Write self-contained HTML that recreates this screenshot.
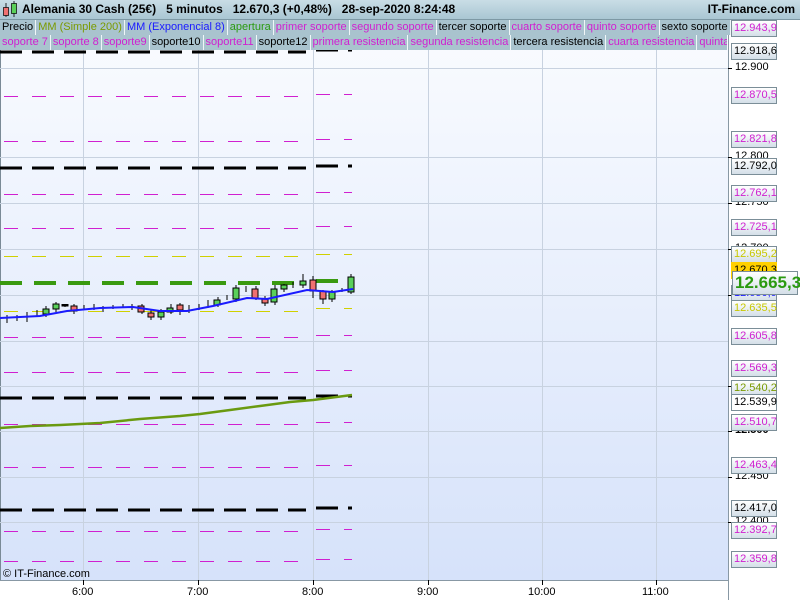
<!DOCTYPE html>
<html><head><meta charset="utf-8"><style>
body{margin:0;width:800px;height:600px;overflow:hidden;font-family:"Liberation Sans",sans-serif;background:#fff;position:relative}
.top{position:absolute;left:0;top:0;width:800px;height:19px;background:linear-gradient(#c9dde6,#a9c6d3);border-bottom:1px solid #7d98a4;font-size:12px;font-weight:bold;line-height:19px}
.leg{position:absolute;left:0;height:15px;font-size:11px;line-height:15px;white-space:nowrap;display:flex}
.leg span{background:#a9c3ce;border-right:1px solid #f0f6f8;padding:0 2px}
.lbl{position:absolute;left:731px;font-size:11px;line-height:15px;padding-left:2px;box-sizing:border-box;width:46px;height:17px;border:1px solid #7b8e98;background:linear-gradient(#fff,#d4dfe8)}
.ax{position:absolute;font-size:11px;color:#000}
</style></head><body>
<svg width="800" height="600" style="position:absolute;left:0;top:0">
<defs><linearGradient id="bg" x1="0" y1="0" x2="0" y2="1"><stop offset="0" stop-color="#fafcff"/><stop offset="1" stop-color="#d6e2fa"/></linearGradient></defs>
<rect x="0" y="19" width="728" height="561" fill="url(#bg)"/>
<rect x="0" y="19" width="1" height="580" fill="#7a8a96"/>
<g stroke="#c8d2e0" stroke-width="1">
<line x1="83.5" y1="49" x2="83.5" y2="586"/><line x1="198.5" y1="49" x2="198.5" y2="586"/><line x1="313.5" y1="49" x2="313.5" y2="586"/><line x1="428.5" y1="49" x2="428.5" y2="586"/><line x1="542.5" y1="49" x2="542.5" y2="586"/><line x1="656.5" y1="49" x2="656.5" y2="586"/>
<line x1="0" y1="68.5" x2="728" y2="68.5"/><line x1="0" y1="157.5" x2="728" y2="157.5"/><line x1="0" y1="203.5" x2="728" y2="203.5"/><line x1="0" y1="249.5" x2="728" y2="249.5"/><line x1="0" y1="295.5" x2="728" y2="295.5"/><line x1="0" y1="341.5" x2="728" y2="341.5"/><line x1="0" y1="386.5" x2="728" y2="386.5"/><line x1="0" y1="431.5" x2="728" y2="431.5"/><line x1="0" y1="477.5" x2="728" y2="477.5"/><line x1="0" y1="522.5" x2="728" y2="522.5"/>
</g>
<rect x="0" y="580" width="728" height="20" fill="#fff"/>
<line x1="0" y1="580.5" x2="728" y2="580.5" stroke="#8898a4"/>
<line x1="728.5" y1="19" x2="728.5" y2="600" stroke="#8898a4"/>
<g stroke="#000" stroke-width="3" stroke-dasharray="22,10">
<path d="M0 52H306M316 50H352"/><path d="M0 168H306M316 166H352"/><path d="M0 398H306M316 396H352"/><path d="M0 510H306M316 508H352"/>
</g>
<g stroke="#d020d0" stroke-width="1" stroke-dasharray="14,14">
<path d="M4 96.5H306M316 94.5H352"/><path d="M4 141.5H306M316 139.5H352"/><path d="M4 194.5H306M316 192.5H352"/><path d="M4 228.5H306M316 226.5H352"/><path d="M4 337.5H306M316 335.5H352"/><path d="M4 372.5H306M316 370.5H352"/><path d="M4 424.5H306M316 422.5H352"/><path d="M4 467.5H306M316 465.5H352"/><path d="M4 531.5H306M316 529.5H352"/><path d="M4 561.5H306M316 559.5H352"/>
</g>
<g stroke="#d0d000" stroke-width="1" stroke-dasharray="14,14"><path d="M4 256.5H306M316 254.5H352"/><path d="M4 311.5H306M316 308.5H352"/></g>
<path d="M0 283H306M316 281H352" stroke="#3a9a10" stroke-width="4" stroke-dasharray="22,12"/>
<path d="M0 428L30 426L60 425L100 423L140 419L180 416L200 414L230 410L260 406L290 402L313 400L352 395" fill="none" stroke="#6a9a10" stroke-width="2.5"/>
<g stroke="#000" stroke-width="1">
<path d="M7 315v8M17 315v6M27 312v10M37 310v6M46 306v11M56 302v10M65 304v3M74 304v10M84 305v5M94 304v6M103 306v6M113 305v4M123 304v4M132 304v6M142 304v10M151 310v10M161 309v11M171 304v10M180 303v12M189 305v8M199 304v6M208 300v8M218 297v10M227 295v5M236 285v17M246 286v6M256 286v14M265 296v10M275 285v20M284 284v8M293 282v6M303 274v14M313 276v22M323 290v14M332 290v12M342 288v4M351 274v20"/>
</g>
<g stroke="#000" stroke-width="1">
<rect x="43" y="309" width="6" height="5" fill="#5ad05a"/><rect x="53" y="304" width="6" height="5" fill="#5ad05a"/><rect x="62" y="304.5" width="6" height="1.5" fill="#000"/><rect x="71" y="306" width="6" height="5" fill="#f07070"/><rect x="138" y="306" width="6" height="6" fill="#f07070"/><rect x="148" y="313" width="6" height="4" fill="#f07070"/><rect x="158" y="312" width="6" height="5" fill="#5ad05a"/><rect x="167" y="308" width="6" height="4" fill="#5ad05a"/><rect x="177" y="305" width="6" height="5" fill="#f07070"/><rect x="214" y="300" width="6" height="5" fill="#5ad05a"/><rect x="233" y="288" width="6" height="11" fill="#5ad05a"/><rect x="252" y="289" width="6" height="9" fill="#f07070"/><rect x="262" y="299" width="6" height="4" fill="#f07070"/><rect x="271" y="289" width="6" height="13" fill="#5ad05a"/><rect x="281" y="285" width="6" height="4" fill="#5ad05a"/><rect x="300" y="281" width="6" height="4" fill="#5ad05a"/><rect x="310" y="280" width="6" height="11" fill="#f07070"/><rect x="320" y="291" width="6" height="8" fill="#f07070"/><rect x="329" y="292" width="6" height="7" fill="#5ad05a"/><rect x="348" y="277" width="6" height="15" fill="#5ad05a"/>
</g>
<path d="M0 318L40 316L67 311L100 308L133 307L160 311L187 311L213 306L247 298L267 299L307 290L333 292L353 289" fill="none" stroke="#1a1aff" stroke-width="2"/>
<g stroke="#000"><path d="M728 68.5h4M728 157.5h4M728 203.5h4M728 249.5h4M728 295.5h4M728 386.5h4M728 431.5h4M728 477.5h4M728 522.5h4M83.5 580v5M198.5 580v5M313.5 580v5M428.5 580v5M542.5 580v5M656.5 580v5"/></g>
</svg>
<div class="top"><svg width="20" height="19" style="position:absolute;left:0;top:0"><path d="M6 3v14M14 1v16" stroke="#000" stroke-width=".8"/><rect x="3.5" y="7.5" width="5" height="8" fill="#f07070" stroke="#000" stroke-width=".7"/><rect x="11.5" y="3.5" width="5" height="10" fill="#5ad05a" stroke="#000" stroke-width=".7"/></svg><span style="position:absolute;left:22px">Alemania 30 Cash (25€) &nbsp; 5 minutos &nbsp; 12.670,3 (+0,48%) &nbsp; 28-sep-2020 8:24:48</span><span style="position:absolute;right:5px">IT-Finance.com</span></div>
<div class="leg" style="top:20px"><span>Precio</span><span style="color:#7a9a00">MM (Simple 200)</span><span style="color:#1a1aff">MM (Exponencial 8)</span><span style="color:#2a9a10">apertura</span><span style="color:#d020d0">primer soporte</span><span style="color:#d020d0">segundo soporte</span><span>tercer soporte</span><span style="color:#d020d0">cuarto soporte</span><span style="color:#d020d0">quinto soporte</span><span>sexto soporte</span></div>
<div class="leg" style="top:35px;width:727px;overflow:hidden"><span style="color:#d020d0">soporte 7</span><span style="color:#d020d0">soporte 8</span><span style="color:#d020d0">soporte9</span><span>soporte10</span><span style="color:#d020d0">soporte11</span><span>soporte12</span><span style="color:#d020d0">primera resistencia</span><span style="color:#d020d0">segunda resistencia</span><span>tercera resistencia</span><span style="color:#d020d0">cuarta resistencia</span><span style="color:#d020d0">quinta resistencia</span></div>
<div class="ax" style="left:735px;top:61px">12.900</div>
<div class="ax" style="left:735px;top:150px">12.800</div>
<div class="ax" style="left:735px;top:196px">12.750</div>
<div class="ax" style="left:735px;top:242px">12.700</div>
<div class="ax" style="left:735px;top:424px;font-weight:bold">12.500</div>
<div class="ax" style="left:735px;top:470px">12.450</div>
<div class="ax" style="left:735px;top:515px">12.400</div>
<div class="lbl" style="top:20px;color:#d020d0">12.943,9</div>
<div class="lbl" style="top:43px">12.918,6</div>
<div class="lbl" style="top:87px;color:#d020d0">12.870,5</div>
<div class="lbl" style="top:131px;color:#d020d0">12.821,8</div>
<div class="lbl" style="top:158px">12.792,0</div>
<div class="lbl" style="top:185px;color:#d020d0">12.762,1</div>
<div class="lbl" style="top:219px;color:#d020d0">12.725,1</div>
<div class="lbl" style="top:246px;color:#c8c800">12.695,2</div>
<div class="lbl" style="top:262px;background:#ffd000;border-color:#ffd000">12.670,3</div>
<div class="lbl" style="top:285px;color:#1a1aff">12.650,9</div>
<div class="lbl" style="top:300px;color:#c8c800">12.635,5</div>
<div class="lbl" style="top:328px;color:#d020d0">12.605,8</div>
<div class="lbl" style="top:360px;color:#d020d0">12.569,3</div>
<div class="lbl" style="top:380px;color:#7a9a00">12.540,2</div>
<div class="lbl" style="top:394px;background:#fff">12.539,9</div>
<div class="lbl" style="top:414px;color:#d020d0">12.510,7</div>
<div class="lbl" style="top:457px;color:#d020d0">12.463,4</div>
<div class="lbl" style="top:500px">12.417,0</div>
<div class="lbl" style="top:522px;color:#d020d0">12.392,7</div>
<div class="lbl" style="top:551px;color:#d020d0">12.359,8</div>
<div class="lbl" style="top:271px;left:732px;width:66px;height:24px;font-size:17px;line-height:22px;font-weight:bold;color:#2a9a10">12.665,3</div>
<div class="ax" style="left:3px;top:568px">© IT-Finance.com</div>
<div class="ax" style="left:72px;top:586px">6:00</div>
<div class="ax" style="left:187px;top:586px">7:00</div>
<div class="ax" style="left:302px;top:586px">8:00</div>
<div class="ax" style="left:417px;top:586px">9:00</div>
<div class="ax" style="left:528px;top:586px">10:00</div>
<div class="ax" style="left:642px;top:586px">11:00</div>
</body></html>
